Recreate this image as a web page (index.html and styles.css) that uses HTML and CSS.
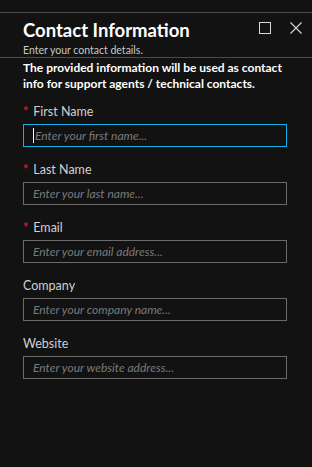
FILE: index.html
```html
<!DOCTYPE html>
<html lang="en">
<head>
    <meta charset="UTF-8">
    <meta name="viewport" content="width=device-width, initial-scale=1.0">
    <title>Contact Information</title>
    <link rel="stylesheet" href="styles.css">
</head>
<body>
    <div class="blade">
        <div class="blade-header">
            <div class="titles">
                <h1>Contact Information</h1>
                <div class="subtitle">Enter your contact details.</div>
            </div>
            <div class="controls">
                <svg class="icon" width="12" height="12" viewBox="0 0 12 12">
                    <rect x="0.5" y="0.5" width="11" height="11" fill="none" stroke="#d8d8d8" stroke-width="1"/>
                </svg>
                <svg class="icon" width="12" height="12" viewBox="0 0 12 12">
                    <path d="M0.5 0.5 L11.5 11.5 M11.5 0.5 L0.5 11.5" stroke="#d8d8d8" stroke-width="1.1"/>
                </svg>
            </div>
        </div>

        <div class="content">
            <p class="description">The provided information will be used as contact info for support agents / technical contacts.</p>

            <div class="field">
                <label><span class="req">*</span>First Name</label>
                <div class="input focused"><span class="caret"></span>Enter your first name...</div>
            </div>
            <div class="field">
                <label><span class="req">*</span>Last Name</label>
                <div class="input">Enter your last name...</div>
            </div>
            <div class="field">
                <label><span class="req">*</span>Email</label>
                <div class="input">Enter your email address...</div>
            </div>
            <div class="field">
                <label>Company</label>
                <div class="input">Enter your company name...</div>
            </div>
            <div class="field">
                <label>Website</label>
                <div class="input">Enter your website address...</div>
            </div>
        </div>
    </div>
</body>
</html>
```
FILE: styles.css
```css
* {
    margin: 0;
    padding: 0;
    box-sizing: border-box;
}

body {
    font-family: 'Lato', 'Open Sans', sans-serif;
    background: #121212;
    color: #fff;
    height: 467px;
    overflow: hidden;
}

.blade {
    margin-top: 12px;
    border-top: 1px solid #4a4a4a;
}

.blade-header {
    display: flex;
    justify-content: space-between;
    padding: 6px 10px 0 23px;
    height: 45px;
    border-bottom: 1px solid #4a4a4a;
}

h1 {
    font-size: 18.5px;
    font-weight: 700;
    line-height: 22px;
}

.subtitle {
    font-size: 10.5px;
    line-height: 14px;
    color: #c8c8c8;
    margin-top: 2px;
}

.controls {
    display: flex;
    align-items: flex-start;
    gap: 19px;
    padding-top: 3px;
}

.content {
    padding: 0 25px 0 23px;
}

.description {
    font-size: 12px;
    font-weight: 700;
    line-height: 16px;
    margin-top: 2px;
    margin-right: -6px;
}

.field {
    margin-top: 12px;
}

.field + .field {
    margin-top: 15px;
}

label {
    display: block;
    font-size: 12.5px;
    line-height: 16px;
    color: #d0d0d0;
    margin-bottom: 4px;
}

.req {
    color: #e81123;
    font-weight: 700;
    margin-right: 5px;
}

.input {
    height: 23px;
    border: 1px solid #6b6b6b;
    font-size: 12px;
    font-style: italic;
    line-height: 21px;
    color: #7a7a7a;
    padding-left: 9px;
    display: flex;
    align-items: center;
}

.input.focused {
    border-color: #0fb0e8;
}

.caret {
    width: 1px;
    height: 15px;
    background: #fff;
    margin-right: 1px;
}
```
